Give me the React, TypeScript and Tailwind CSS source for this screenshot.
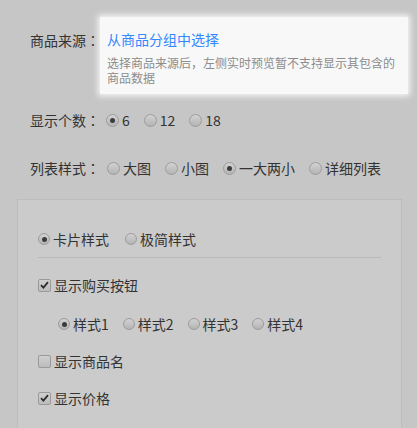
import React from "react";

const font = { fontFamily: '"Noto Sans CJK SC", "Noto Sans", sans-serif' };

function Colon() {
  return <span style={{ fontFamily: '"Noto Sans CJK JP", sans-serif' }}>：</span>;
}

function Radio({ checked, label, small }: { checked?: boolean; label: string; small?: boolean }) {
  return (
    <label className="flex items-center mr-[14px] shrink-0">
      <span
        className={`${small ? "w-[12px] h-[12px]" : "w-[13px] h-[13px]"} rounded-full border border-[#9c9c9c] bg-gradient-to-b from-[#d2d2d2] to-[#b4b4b4] flex items-center justify-center`}
      >
        {checked && <span className="w-[5px] h-[5px] rounded-full bg-[#3c3c3c]" />}
      </span>
      <span className="ml-[3px] whitespace-nowrap">{label}</span>
    </label>
  );
}

function Checkbox({ checked, label }: { checked?: boolean; label: string }) {
  return (
    <label className="flex items-center h-[20px]">
      <span className="w-[13px] h-[13px] rounded-[2px] border border-[#9a9a9a] bg-gradient-to-b from-[#d0d0d0] to-[#bcbcbc] flex items-center justify-center">
        {checked && (
          <svg width="9" height="8" viewBox="0 0 9 8">
            <path d="M1 4.2 L3.4 6.6 L8 1.2" fill="none" stroke="#2e2e2e" strokeWidth="1.8" />
          </svg>
        )}
      </span>
      <span className="ml-[3px]">{label}</span>
    </label>
  );
}

export default function App() {
  return (
    <div
      className="w-[417px] h-[428px] overflow-hidden bg-[#c6c6c6] text-[14px] leading-[20px] text-[#333]"
      style={font}
    >
      <div className="pt-[17px]">
        {/* 商品来源 */}
        <div className="flex items-start">
          <div className="w-[100px] text-right mt-[13px] whitespace-nowrap">
            商品来源<Colon />
          </div>
          <div className="w-[308px] h-[77px] bg-[#f8f8f8] pl-[7px] pt-[12px] shadow-[0_0_6px_2px_rgba(255,255,255,0.85)]">
            <div className="text-[#3388ff]">从商品分组中选择</div>
            <div className="mt-[6px] text-[12px] leading-[15px] text-[#8c8c8c] pr-[8px]">
              选择商品来源后，左侧实时预览暂不支持显示其包含的商品数据
            </div>
          </div>
        </div>

        {/* 显示个数 */}
        <div className="flex items-center h-[20px] mt-[16px]">
          <div className="w-[100px] text-right whitespace-nowrap">
            显示个数<Colon />
          </div>
          <div className="flex items-center pl-[6px]">
            <Radio checked label="6" />
            <Radio label="12" />
            <Radio label="18" />
          </div>
        </div>

        {/* 列表样式 */}
        <div className="flex items-center h-[20px] mt-[28px]">
          <div className="w-[100px] text-right whitespace-nowrap">
            列表样式<Colon />
          </div>
          <div className="flex items-center pl-[7px]">
            <Radio label="大图" />
            <Radio label="小图" />
            <Radio checked label="一大两小" />
            <Radio label="详细列表" />
          </div>
        </div>

        {/* 样式面板 */}
        <div className="ml-[17px] w-[385px] mt-[21px] h-[240px] border border-[#bcbcbc] bg-[#cbcbcb] px-[20px] pt-[29px]">
          <div className="flex items-center h-[20px]">
            <Radio small checked label="卡片样式" />
            <div className="ml-[2px] flex">
              <Radio small label="极简样式" />
            </div>
          </div>
          <div className="mt-[8px] h-px bg-[#bababa]" />
          <div className="mt-[17px]">
            <Checkbox checked label="显示购买按钮" />
          </div>
          <div className="mt-[19px] flex items-center h-[20px] pl-[20px]">
            <Radio small checked label="样式1" />
            <Radio small label="样式2" />
            <Radio small label="样式3" />
            <Radio small label="样式4" />
          </div>
          <div className="mt-[17px]">
            <Checkbox label="显示商品名" />
          </div>
          <div className="mt-[17px]">
            <Checkbox checked label="显示价格" />
          </div>
        </div>
      </div>
    </div>
  );
}
